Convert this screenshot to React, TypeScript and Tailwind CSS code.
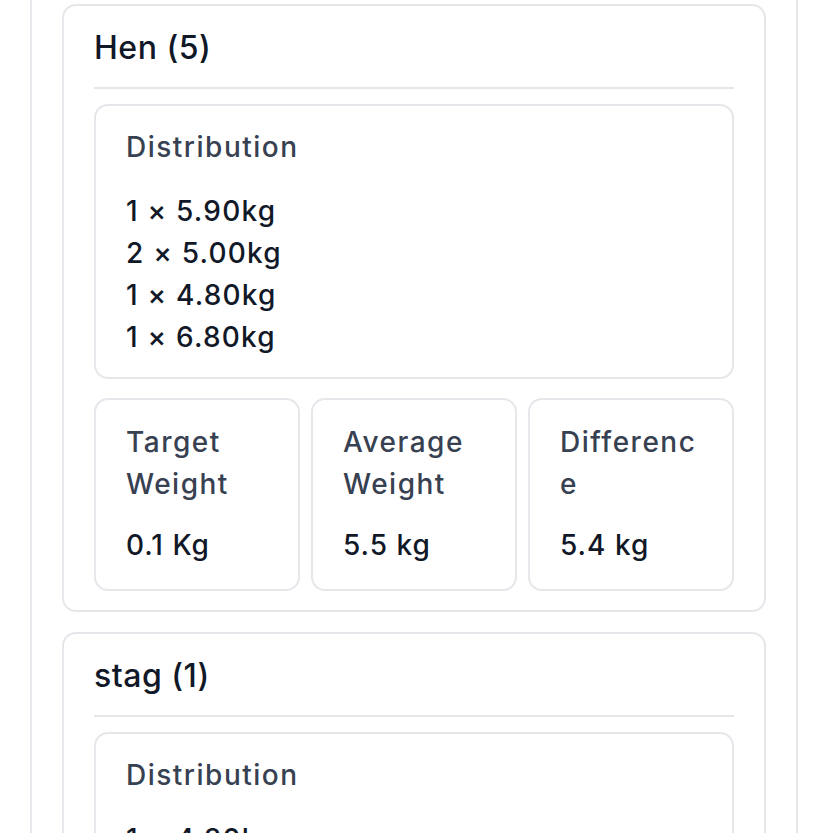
const groups = [
  {
    name: "Hen",
    count: 5,
    distribution: [
      { qty: 1, weight: "5.90kg" },
      { qty: 2, weight: "5.00kg" },
      { qty: 1, weight: "4.80kg" },
      { qty: 1, weight: "6.80kg" },
    ],
    stats: [
      { label: "Target Weight", value: "0.1 Kg" },
      { label: "Average Weight", value: "5.5 kg" },
      { label: "Difference", value: "5.4 kg" },
    ],
  },
  {
    name: "stag",
    count: 1,
    distribution: [{ qty: 1, weight: "4.80kg" }],
    stats: [
      { label: "Target Weight", value: "0.1 Kg" },
      { label: "Average Weight", value: "4.8 kg" },
      { label: "Difference", value: "4.7 kg" },
    ],
  },
];

function GroupCard({ group }: { group: (typeof groups)[number] }) {
  return (
    <div className="rounded-[14px] border-2 border-[#e5e7eb] bg-white px-[30px] pt-[18px] pb-[19px]">
      <h2 className="border-b-2 border-[#e5e7eb] pb-[15px] text-[32px] leading-[48px] font-medium tracking-[0.5px] text-[#111827]">
        {group.name} ({group.count})
      </h2>

      <div className="mt-[15px] flex flex-col gap-[19px]">
        {/* Distribution */}
        <div className="rounded-[14px] border-2 border-[#e5e7eb] px-[30px] pt-[20px] pb-[19px]">
          <p className="text-[28px] leading-[42px] font-medium tracking-[1.5px] text-[#374151]">
            Distribution
          </p>
          <div className="mt-[22px] flex flex-col">
            {group.distribution.map((d, i) => (
              <span
                key={i}
                className="text-[28px] leading-[42px] font-medium tracking-[1.2px] text-[#111827]"
              >
                {d.qty} × {d.weight}
              </span>
            ))}
          </div>
        </div>

        {/* Stats */}
        <div className="grid grid-cols-3 gap-[11px]">
          {group.stats.map((s) => (
            <div
              key={s.label}
              className="rounded-[14px] border-2 border-[#e5e7eb] px-[30px] pt-[21px] pb-[23px]"
            >
              <p className="text-[28px] leading-[42px] font-medium tracking-[1.5px] text-[#374151] break-words">
                {s.label}
              </p>
              <p className="mt-[19px] text-[28px] leading-[42px] font-medium tracking-[1px] text-[#111827]">
                {s.value}
              </p>
            </div>
          ))}
        </div>
      </div>
    </div>
  );
}

export default function App() {
  return (
    <div className="h-[833px] overflow-hidden bg-white font-['Inter',sans-serif]">
      <div className="mx-[30px] min-h-full border-x-2 border-[#e5e7eb] px-[30px] pt-[4px]">
        <div className="flex flex-col gap-[20px]">
          {groups.map((g) => (
            <GroupCard key={g.name} group={g} />
          ))}
        </div>
      </div>
    </div>
  );
}
